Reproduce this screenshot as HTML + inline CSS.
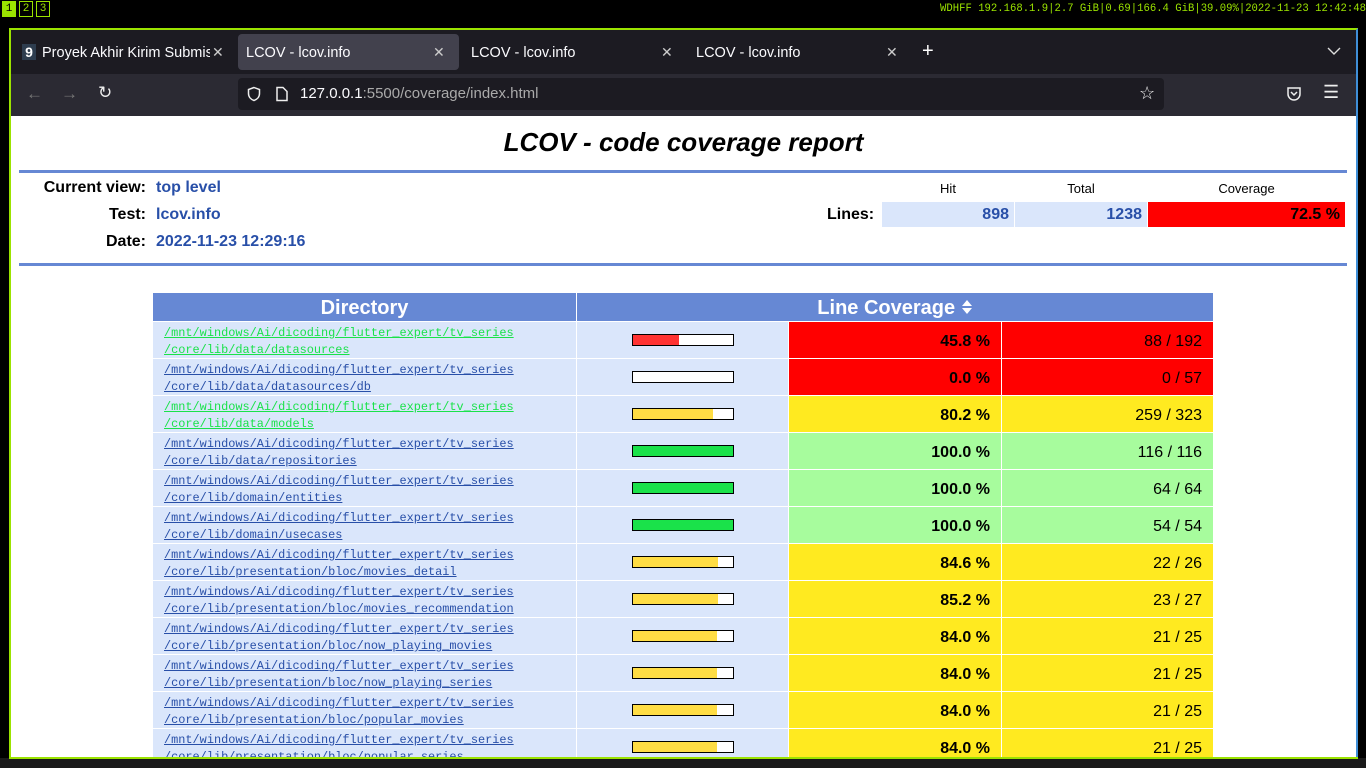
<!DOCTYPE html>
<html><head><meta charset="utf-8"><style>
*{margin:0;padding:0;box-sizing:border-box}
body{width:1366px;height:768px;background:#000;position:relative;overflow:hidden;font-family:"Liberation Sans",sans-serif}
.a{position:absolute}
.ws{top:1px;width:14px;height:16px;border:1px solid #9be300;color:#9be300;font:11px "Liberation Mono",monospace;text-align:center;line-height:14px}
.tab{top:36px;height:34px;color:#fbfbfe;font-size:14.5px;line-height:34px;padding-left:10px}
.x{color:#ccc;font-size:14px}
.row{position:absolute;left:153px;width:1060px;height:36px}
.c{position:absolute;top:0;height:36px}
.d{left:0;width:423px;background:#dae6fb;font:11.9px "Liberation Mono",monospace;line-height:17px;padding:3px 0 0 11px}
.d a{text-decoration:underline}
.b{left:424px;width:211px;background:#dae6fb}
.bar{position:absolute;left:55px;top:12px;width:102px;height:12px;border:1px solid #000;background:#fff}
.p{left:636px;width:212px;text-align:right;padding-right:11px;font-weight:bold;font-size:16px;line-height:39px}
.n{left:849px;width:211px;text-align:right;padding-right:11px;font-size:16px;line-height:39px}
.lab{font-weight:bold;font-size:16px;text-align:right;width:135px;left:0}
.val{left:145px;font-weight:bold;font-size:16px;color:#284fa8}
</style></head><body>
<div class="a ws" style="left:2px;background:#9be300;color:#000">1</div>
<div class="a ws" style="left:19px">2</div>
<div class="a ws" style="left:36px">3</div>
<div class="a" style="right:0;top:3px;color:#9be300;font:10.6px 'Liberation Mono',monospace">WDHFF 192.168.1.9|2.7 GiB|0.69|166.4 GiB|39.09%|2022-11-23 12:42:48</div>
<div class="a" style="left:9px;top:28px;width:1349px;height:731px;border:2px solid #9be300;border-right-color:#3f8fd8;background:#1c1b22"></div>
<div class="a" style="left:238px;top:34px;width:221px;height:36px;background:#42414d;border-radius:4px"></div>
<div class="a" style="left:22px;top:44px;width:14px;height:16px;background:#2e3d4f;color:#fff;font-size:14px;font-weight:bold;line-height:16px;text-align:center">9</div>
<div class="a tab" style="left:32px;width:178px;overflow:hidden;white-space:nowrap">Proyek Akhir Kirim Submis</div>
<div class="a x" style="left:212px;top:44px">✕</div>
<div class="a tab" style="left:236px">LCOV - lcov.info</div><div class="a x" style="left:433px;top:44px">✕</div>
<div class="a tab" style="left:461px">LCOV - lcov.info</div><div class="a x" style="left:661px;top:44px">✕</div>
<div class="a tab" style="left:686px">LCOV - lcov.info</div><div class="a x" style="left:886px;top:44px">✕</div>
<div class="a" style="left:922px;top:40px;color:#fff;font-size:20px">+</div>
<svg class="a" style="left:1327px;top:46px" width="14" height="10"><path d="M1 2l6 6 6-6" fill="none" stroke="#ddd" stroke-width="1.4"/></svg>
<div class="a" style="left:11px;top:74px;width:1345px;height:42px;background:#2b2a33"></div>
<div class="a" style="left:26px;top:84px;color:#777;font-size:17px">←</div>
<div class="a" style="left:61px;top:84px;color:#777;font-size:17px">→</div>
<div class="a" style="left:98px;top:83px;color:#eee;font-size:17px">↻</div>
<div class="a" style="left:238px;top:78px;width:926px;height:32px;background:#1c1b22;border-radius:4px"></div>
<svg class="a" style="left:246px;top:86px" width="16" height="16"><path d="M8 1.5L2.5 3.5v4c0 3.5 2.5 6 5.5 7 3-1 5.5-3.5 5.5-7v-4z" fill="none" stroke="#eee" stroke-width="1.5"/></svg>
<svg class="a" style="left:275px;top:86px" width="14" height="16"><path d="M2 1.5h6l4 4v9H2z" fill="none" stroke="#eee" stroke-width="1.5"/></svg>
<div class="a" style="left:300px;top:85px;color:#fbfbfe;font-size:15px">127.0.0.1<span style="color:#aaa">:5500/coverage/index.html</span></div>
<div class="a" style="left:1139px;top:83px;color:#eee;font-size:18px">☆</div>
<svg class="a" style="left:1286px;top:86px" width="16" height="16"><path d="M2 2h12v6a6 6 0 0 1-12 0z" fill="none" stroke="#eee" stroke-width="1.5"/><path d="M5 6l3 3 3-3" fill="none" stroke="#eee" stroke-width="1.5"/></svg>
<div class="a" style="left:1323px;top:82px;color:#eee;font-size:18px">☰</div>
<div class="a" style="left:11px;top:116px;width:1345px;height:641px;background:#fff;overflow:hidden">
<div class="a" style="left:0;width:100%;top:11px;text-align:center;font-size:26px;font-weight:bold;font-style:italic">LCOV - code coverage report</div>
<div class="a" style="left:8px;top:54px;width:1328px;height:3px;background:#6688d4"></div>
<div class="a" style="left:8px;top:147px;width:1328px;height:3px;background:#6688d4"></div>
<div class="a lab" style="top:63px">Current view:</div><div class="a val" style="top:63px">top level</div>
<div class="a lab" style="top:90px">Test:</div><div class="a val" style="top:90px">lcov.info</div>
<div class="a lab" style="top:117px">Date:</div><div class="a val" style="top:117px">2022-11-23 12:29:16</div>
<div class="a" style="left:871px;top:65px;width:132px;text-align:center;font-size:13px">Hit</div>
<div class="a" style="left:1004px;top:65px;width:132px;text-align:center;font-size:13px">Total</div>
<div class="a" style="left:1137px;top:65px;width:197px;text-align:center;font-size:13px">Coverage</div>
<div class="a" style="left:816px;top:90px;font-weight:bold;font-size:16px">Lines:</div>
<div class="a" style="left:871px;top:86px;width:132px;height:25px;background:#dae6fb;color:#284fa8;font-weight:bold;text-align:right;padding-right:5px;line-height:26px;font-size:16px">898</div>
<div class="a" style="left:1004px;top:86px;width:132px;height:25px;background:#dae6fb;color:#284fa8;font-weight:bold;text-align:right;padding-right:5px;line-height:26px;font-size:16px">1238</div>
<div class="a" style="left:1137px;top:86px;width:197px;height:25px;background:#f00;font-weight:bold;text-align:right;padding-right:5px;line-height:26px;font-size:16px">72.5 %</div>
</div>
<div class="a" style="left:153px;top:293px;width:423px;height:28px;background:#6688d4;color:#fff;font-weight:bold;font-size:20px;text-align:center;line-height:30px">Directory</div>
<div class="a" style="left:577px;top:293px;width:636px;height:28px;background:#6688d4;color:#fff;font-weight:bold;font-size:20px;text-align:center;line-height:30px">Line Coverage <svg width="12" height="16" style="vertical-align:-1px"><path d="M1 7l5-6 5 6zM1 9l5 6 5-6z" fill="#fff"/></svg></div>
<div id="rows"></div>
<script>
var R=[["data/datasources",45.8,"88 / 192","#f00","#ff3333",1],["data/datasources/db",0.0,"0 / 57","#f00","#ff3333",0],["data/models",80.2,"259 / 323","#ffea20","#ffdd44",1],["data/repositories",100.0,"116 / 116","#a7fc9d","#1ae24a",0],["domain/entities",100.0,"64 / 64","#a7fc9d","#1ae24a",0],["domain/usecases",100.0,"54 / 54","#a7fc9d","#1ae24a",0],["presentation/bloc/movies_detail",84.6,"22 / 26","#ffea20","#ffdd44",0],["presentation/bloc/movies_recommendation",85.2,"23 / 27","#ffea20","#ffdd44",0],["presentation/bloc/now_playing_movies",84.0,"21 / 25","#ffea20","#ffdd44",0],["presentation/bloc/now_playing_series",84.0,"21 / 25","#ffea20","#ffdd44",0],["presentation/bloc/popular_movies",84.0,"21 / 25","#ffea20","#ffdd44",0],["presentation/bloc/popular_series",84.0,"21 / 25","#ffea20","#ffdd44",0]];
var h="";R.forEach(function(r,i){var col=r[5]?"#1ae24a":"#284fa8";var top=322+i*37;
h+='<div class="row" style="top:'+top+'px"><div class="c d"><a style="color:'+col+'">/mnt/windows/Ai/dicoding/flutter_expert/tv_series<br>/core/lib/'+r[0]+'</a></div><div class="c b"><div class="bar"><div style="width:'+r[1]+'%;height:100%;background:'+r[4]+'"></div></div></div><div class="c p" style="background:'+r[3]+'">'+r[1].toFixed(1)+' %</div><div class="c n" style="background:'+r[3]+'">'+r[2]+'</div></div>';});
document.getElementById("rows").innerHTML=h;
</script>
<div class="a" style="left:0;top:758px;width:1366px;height:10px;background:#1a1a1a"></div>
<div class="a" style="left:9px;top:757px;width:1349px;height:2px;background:#9be300"></div>
</body></html>
